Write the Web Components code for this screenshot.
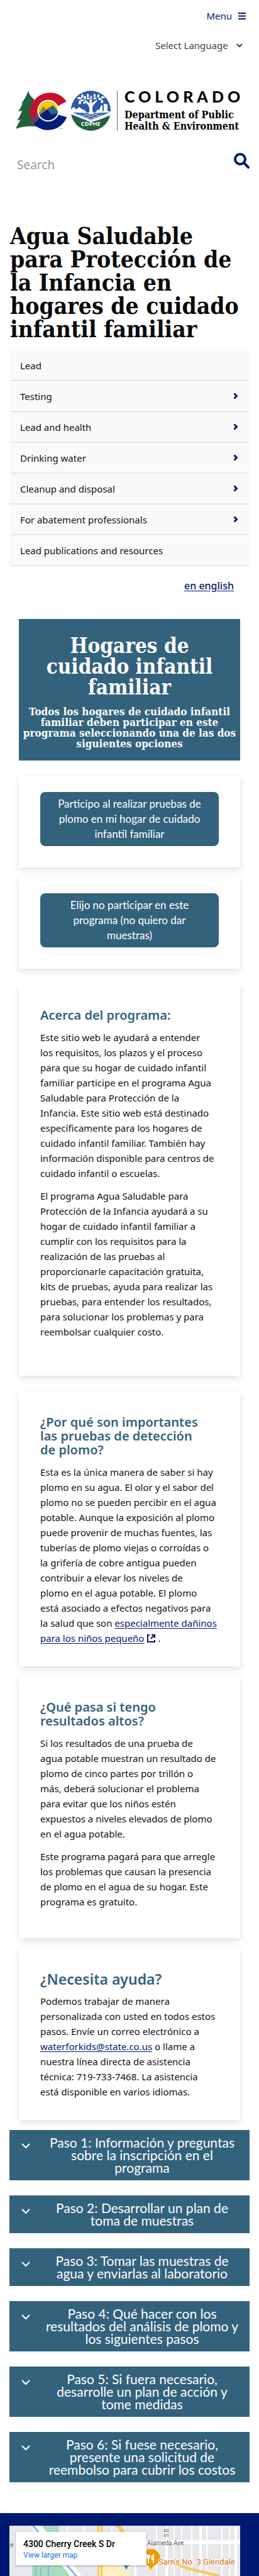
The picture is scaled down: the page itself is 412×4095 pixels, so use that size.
<!DOCTYPE html>
<html lang="es">
<head>
<meta charset="utf-8">
<meta name="viewport" content="width=device-width, initial-scale=1">
<title>Agua Saludable para Protección de la Infancia</title>
<style>
  :root {
    --sans: "Noto Sans", "Open Sans", sans-serif;
    --display: Lato, sans-serif;
    --slab: "DejaVu Serif Condensed", "DejaVu Serif", serif;
    --teal: #33627d;
    --navy: #001970;
  }
  body { margin: 0; background: #fff; color: #111; font: 15px/24px var(--sans); }
</style>
</head>
<body>
<site-header></site-header>
<main>
  <page-title>Agua Saludable<br>para Protección de<br>la Infancia en<br>hogares de cuidado<br>infantil familiar</page-title>
  <section-nav>
    <nav-item>Lead</nav-item>
    <nav-item expandable>Testing</nav-item>
    <nav-item expandable>Lead and health</nav-item>
    <nav-item expandable>Drinking water</nav-item>
    <nav-item expandable>Cleanup and disposal</nav-item>
    <nav-item expandable>For abatement professionals</nav-item>
    <nav-item>Lead publications and resources</nav-item>
  </section-nav>
  <language-switch><text-link strong>en english</text-link></language-switch>
  <card-stack>
    <hero-banner>
      <span slot="title">Hogares de<br>cuidado infantil<br>familiar</span>
      Todos los hogares de cuidado infantil<br>familiar deben participar en este<br>programa seleccionando una de las dos<br>siguientes opciones
    </hero-banner>
    <content-card kind="action"><action-button>Participo al realizar pruebas de<br>plomo en mi hogar de cuidado<br>infantil familiar</action-button></content-card>
    <content-card kind="action last"><action-button>Elijo no participar en este<br>programa (no quiero dar<br>muestras)</action-button></content-card>
    <content-card kind="about">
      <h3>Acerca del programa:</h3>
      <p>Este sitio web le ayudará a entender<br>los requisitos, los plazos y el proceso<br>para que su hogar de cuidado infantil<br>familiar participe en el programa Agua<br>Saludable para Protección de la<br>Infancia. Este sitio web está destinado<br>específicamente para los hogares de<br>cuidado infantil familiar. También hay<br>información disponible para centros de<br>cuidado infantil o escuelas.</p>
      <p>El programa Agua Saludable para<br>Protección de la Infancia ayudará a su<br>hogar de cuidado infantil familiar a<br>cumplir con los requisitos para la<br>realización de las pruebas al<br>proporcionarle capacitación gratuita,<br>kits de pruebas, ayuda para realizar las<br>pruebas, para entender los resultados,<br>para solucionar los problemas y para<br>reembolsar cualquier costo.</p>
    </content-card>
    <content-card kind="why">
      <h3>¿Por qué son importantes<br>las pruebas de detección<br>de plomo?</h3>
      <p>Esta es la única manera de saber si hay<br>plomo en su agua. El olor y el sabor del<br>plomo no se pueden percibir en el agua<br>potable. Aunque la exposición al plomo<br>puede provenir de muchas fuentes, las<br>tuberías de plomo viejas o corroídas o<br>la grifería de cobre antigua pueden<br>contribuir a elevar los niveles de<br>plomo en el agua potable. El plomo<br>está asociado a efectos negativos para<br>la salud que son <text-link external>especialmente dañinos<br>para los niños pequeño</text-link> .</p>
    </content-card>
    <content-card kind="results">
      <h3>¿Qué pasa si tengo<br>resultados altos?</h3>
      <p>Si los resultados de una prueba de<br>agua potable muestran un resultado de<br>plomo de cinco partes por trillón o<br>más, deberá solucionar el problema<br>para evitar que los niños estén<br>expuestos a niveles elevados de plomo<br>en el agua potable.</p>
      <p>Este programa pagará para que arregle<br>los problemas que causan la presencia<br>de plomo en el agua de su hogar. Este<br>programa es gratuito.</p>
    </content-card>
    <content-card kind="help">
      <h2>¿Necesita ayuda?</h2>
      <p>Podemos trabajar de manera<br>personalizada con usted en todos estos<br>pasos. Envíe un correo electrónico a<br><text-link href="mailto:waterforkids@state.co.us">waterforkids@state.co.us</text-link> o llame a<br>nuestra línea directa de asistencia<br>técnica: 719-733-7468. La asistencia<br>está disponible en varios idiomas.</p>
    </content-card>
  </card-stack>
  <step-list>
    <step-item>Paso 1: Información y preguntas<br>sobre la inscripción en el<br>programa</step-item>
    <step-item>Paso 2: Desarrollar un plan de<br>toma de muestras</step-item>
    <step-item>Paso 3: Tomar las muestras de<br>agua y enviarlas al laboratorio</step-item>
    <step-item>Paso 4: Qué hacer con los<br>resultados del análisis de plomo y<br>los siguientes pasos</step-item>
    <step-item>Paso 5: Si fuera necesario,<br>desarrolle un plan de acción y<br>tome medidas</step-item>
    <step-item>Paso 6: Si fuese necesario,<br>presente una solicitud de<br>reembolso para cubrir los costos</step-item>
  </step-list>
</main>
<site-footer><office-map></office-map></site-footer>

<script>
const define = (name, markup, setup) => {
  const template = document.createElement('template');
  template.innerHTML = markup;
  customElements.define(name, class extends HTMLElement {
    constructor() {
      super();
      this.attachShadow({ mode: 'open' }).append(template.content.cloneNode(true));
    }
    connectedCallback() { if (setup) setup(this, this.shadowRoot); }
  });
};

define('agency-logo', `
<style>
  :host { display: block; }
  a { display: flex; height: 64px; color: #000; text-decoration: none; }
  svg { width: 152px; height: 64px; flex: none; overflow: visible; }
  .words { border-left: 1px solid #666; margin-left: 9px; padding-left: 11px; white-space: nowrap; }
  .state { display: block; font: 900 25px/18px Lato, sans-serif; letter-spacing: 6px; margin-bottom: 12px; }
  .dept { display: block; font: bold 16px/18px var(--slab); }
</style>
<a href="#">
  <svg viewBox="0 0 456 192" aria-hidden="true">
    <path fill="#24613b" d="M60 0 C66 22 76 32 86 40 L96 70 L100 172 Q48 166 0 182 C8 164 18 148 24 138 L6 144 C18 126 26 110 30 96 L12 100 C24 84 30 68 34 58 L24 66 C40 44 54 22 60 0Z"/>
    <path fill="#c8102e" d="M243 52 A96 96 0 1 0 84 160 L120 130 L160 96Z"/>
    <path fill="#6d3a5d" d="M66 138 L104 108 L122 134 L86 162 A96 96 0 0 1 66 138Z"/>
    <path fill="#001e78" d="M86 160 L122 124 L160 96 L244 126 A96 96 0 0 1 86 160Z"/>
    <path fill="#fff" d="M160 96 L200 78 L255 44 L255 130 L200 114Z"/>
    <circle cx="155" cy="96" r="52" fill="#fff"/>
    <clipPath id="disc"><circle cx="155" cy="96" r="46"/></clipPath>
    <g clip-path="url(#disc)">
      <rect x="105" y="46" width="100" height="100" fill="#ffc800"/>
      <path fill="#8a8438" d="M104 118 L132 74 L146 90 L158 78 L180 100 L180 120Z"/>
      <path fill="#2c628e" d="M140 100 L178 70 L206 104 L206 120 L150 120Z"/>
      <path fill="#001e78" d="M104 124 L120 112 L150 90 L172 116 L206 106 L206 150 L104 150Z"/>
    </g>
    <text x="209" y="189" font-family="Lato" font-size="14" fill="#222">™</text>
    <clipPath id="seal"><circle cx="358" cy="96" r="95"/></clipPath>
    <g clip-path="url(#seal)">
      <rect x="262" width="192" height="192" fill="#2d59a5"/>
      <path fill="#fff" d="M262 92 L276 78 L290 90 L302 78 L318 90 L328 92 L338 104 L380 104 L392 90 L398 94 L408 70 L414 70 L414 98 L420 98 L420 62 L438 66 L438 98 L456 100 V124 L358 150 L262 112Z"/>
      <path fill="#2d59a5" d="M272 104 L358 140 L448 104 L358 108Z"/>
      <path stroke="#fff" stroke-width="2" fill="none" d="M300 112 L362 138 M322 110 L382 130 M344 106 L406 122 M416 112 L354 138 M396 108 L334 132 M374 106 L314 124"/>
      <path fill="#24613b" d="M262 116 L358 156 L456 116 V192 H262Z"/>
      <path stroke="#fff" stroke-width="4" fill="none" d="M262 108 L358 148 L456 108"/>
      <path fill="#fff" d="M348 112 C354 96 352 84 348 72 L328 48 L332 44 L352 60 L356 52 L360 52 L364 60 L386 44 L390 48 L368 72 C364 86 366 98 372 112Z"/>
      <circle cx="358" cy="48" r="7" fill="#fff"/>
      <g fill="#fff">
        <ellipse cx="304" cy="36" rx="10" ry="5"/><ellipse cx="316" cy="46" rx="9" ry="5"/><ellipse cx="306" cy="56" rx="6" ry="9"/>
        <ellipse cx="318" cy="26" rx="5" ry="9"/><ellipse cx="330" cy="34" rx="5" ry="9"/><ellipse cx="344" cy="24" rx="5" ry="9"/>
        <ellipse cx="346" cy="38" rx="8" ry="4"/><ellipse cx="360" cy="32" rx="4" ry="9"/><ellipse cx="376" cy="24" rx="5" ry="9"/>
        <ellipse cx="378" cy="38" rx="8" ry="4"/><ellipse cx="394" cy="26" rx="5" ry="9"/><ellipse cx="402" cy="40" rx="9" ry="5"/>
        <ellipse cx="416" cy="32" rx="9" ry="5"/><ellipse cx="412" cy="52" rx="6" ry="8"/><ellipse cx="328" cy="58" rx="6" ry="6"/>
      </g>
    </g>
    <text x="358" y="169" text-anchor="middle" font-family="Noto Sans" font-weight="700" font-size="28" fill="#fff">CDPHE</text>
  </svg>
  <span class="words"><span class="state">COLORADO</span><span class="dept">Department of Public<br>Health &amp; Environment</span></span>
</a>`);

define('site-header', `
<style>
  :host { display: block; padding: 12px 15px 0 25px; }
  .menu { display: flex; justify-content: flex-end; padding-right: 6px; }
  .menu button { display: flex; align-items: center; gap: 10px; border: 0; padding: 0; background: none; color: var(--navy); font: 15px/26px var(--sans); }
  .language { display: grid; justify-content: end; align-items: center; margin-top: 22px; padding-right: 11px; }
  .language > * { grid-area: 1 / 1; }
  select { appearance: none; border: 0; padding: 0 23px 0 0; background: none; color: #444; font: 15px/24px var(--sans); }
  .language svg { justify-self: end; pointer-events: none; }
  agency-logo { margin-top: 60px; }
  form { display: flex; justify-content: space-between; margin-top: 35px; height: 38px; }
  input { flex: 1; min-width: 0; border: 0; padding: 0 2px; background: none; color: #333; font: 19px/38px var(--sans); outline: 0; }
  input::placeholder { color: #999; opacity: 1; }
  form button { border: 0; padding: 0; background: none; height: 25px; }
  svg { display: block; }
</style>
<div class="menu"><button type="button">Menu
  <svg width="12" height="11" viewBox="0 0 12 11"><path stroke="#001970" stroke-width="2" d="M0 1H12M0 5.5H12M0 10H12"/></svg>
</button></div>
<div class="language">
  <select aria-label="Select Language"><option>Select Language</option></select>
  <svg width="10" height="7" viewBox="0 0 10 7"><path fill="none" stroke="#444" stroke-width="2" d="M1 1L5 5L9 1"/></svg>
</div>
<agency-logo></agency-logo>
<form>
  <input type="text" placeholder="Search" aria-label="Search">
  <button type="button" aria-label="Search"><svg width="25" height="25" viewBox="0 0 25 25"><circle cx="10" cy="10" r="8" fill="none" stroke="#001970" stroke-width="4"/><path d="M16 16L23 23" stroke="#001970" stroke-width="4" stroke-linecap="round"/></svg></button>
</form>`);

define('page-title', `
<style>
  :host { display: block; padding: 76px 0 15px 16px; }
  h1 { margin: 0; font: bold 37px/37px var(--slab); color: #0a0a0a; }
</style>
<h1><slot></slot></h1>`);

define('section-nav', `
<style>:host { display: block; margin: 0 16px; } nav { display: flex; flex-direction: column; }</style>
<nav aria-label="Lead"><slot></slot></nav>`);

define('nav-item', `
<style>
  :host { display: block; }
  a { display: flex; align-items: center; justify-content: space-between; height: 47px; padding: 0 17px 0 16px; background: #fafafa; border-bottom: 2px solid #e8e8e8; color: #111; text-decoration: none; }
  svg { display: none; }
  :host([expandable]) svg { display: block; }
</style>
<a href="#"><slot></slot><svg width="8" height="11" viewBox="0 0 8 11"><path fill="none" stroke="#001970" stroke-width="3" d="M1.500 1.500L5.500 5.500L1.500 9.500"/></svg></a>`);

define('text-link', `
<style>
  :host { display: inline; }
  a { color: #001970; text-decoration: underline; text-underline-offset: 2px; }
  :host([strong]) a { font-size: 16px; font-weight: 500; }
  svg { display: none; }
  :host([external]) svg { display: inline-block; margin-left: 5px; vertical-align: -1px; }
</style>
<a><slot></slot></a><svg width="13" height="13" viewBox="0 0 13 13"><path fill="none" stroke="#001970" stroke-width="2" d="M4 1H1V12H12V9M7 1H12V6M12 1L6 7"/></svg>`,
(host, root) => { root.querySelector('a').href = host.getAttribute('href') || '#'; });

define('language-switch', `
<style>:host { display: block; padding: 19px 40px 41px; text-align: right; }</style>
<slot></slot>`);

define('card-stack', `
<style>:host { display: block; margin: 0 30px; }</style>
<slot></slot>`);

define('hero-banner', `
<style>
  :host { display: block; background: var(--teal); color: #fff; padding: 26px 0 18px; text-align: center; margin-bottom: 24px; }
  h2 { margin: 0 0 14px; font: bold 33px/33px var(--slab); }
  p { margin: 0; font: bold 17px/17px var(--slab); }
</style>
<h2><slot name="title"></slot></h2>
<p><slot></slot></p>`);

define('content-card', `
<style>
  :host { display: block; background: #fff; box-shadow: 0 4px 10px rgba(0,0,0,.12); padding: 38px 14px 33px 34px; margin-bottom: 16px; }
  :host([kind~="action"]) { padding: 26px 34px 34px; margin-bottom: 15px; }
  :host([kind~="last"]) { margin-bottom: 25px; }
  :host([kind="about"]) { padding-bottom: 58px; margin-bottom: 25px; }
  :host([kind="results"]) { padding-bottom: 46px; }
  ::slotted(p) { margin: 12px 0 0; }
  ::slotted(h2), ::slotted(h3) { margin: 0; color: var(--teal); font: 600 20px/22px var(--sans); }
  ::slotted(h2) { font-size: 23px; }
</style>
<slot></slot>`);

define('action-button', `
<style>
  :host { display: block; }
  a { display: block; padding: 7px 10px; border-radius: 8px; background: var(--teal); color: #fff; font: 17px/24px var(--display); text-align: center; text-decoration: none; }
</style>
<a href="#"><slot></slot></a>`);

define('step-list', `
<style>:host { display: flex; flex-direction: column; gap: 24px; padding: 0 15px 49px; }</style>
<slot></slot>`);

define('step-item', `
<style>
  :host { display: block; }
  h3 { margin: 0; }
  button { display: grid; grid-template-columns: 14px 1fr; column-gap: 14px; width: 100%; border: 0; padding: 10px 7px 10px 19px; background: var(--teal); color: #fff; font: 21px/20px var(--display); text-align: center; }
  svg { margin-top: 11px; }
</style>
<h3><button type="button" aria-expanded="false">
  <svg width="14" height="9" viewBox="0 0 14 9"><path fill="none" stroke="#fff" stroke-width="2" d="M1 1L7 7L13 1"/></svg>
  <span><slot></slot></span>
</button></h3>`);

define('site-footer', `
<style>:host { display: block; background: var(--navy); padding: 20px 30px 0 15px; }</style>
<footer><slot></slot></footer>`);

define('office-map', `
<style>
  :host { display: block; position: relative; height: 80px; overflow: hidden; background: #e8e8ec; font-family: Roboto, sans-serif; }
  svg { display: block; width: 100%; height: 80px; }
  .card { position: absolute; left: 10px; top: 10px; box-sizing: border-box; width: 208px; height: 53px; padding: 9px 12px; background: #fff; box-shadow: 0 1px 3px rgba(0,0,0,.3); }
  strong { display: block; font: 500 14px/20px Roboto, sans-serif; color: #000; }
  a { display: block; font: 12px/16px Roboto, sans-serif; color: #1a73e8; text-decoration: none; }
</style>
<svg viewBox="0 0 367 80" preserveAspectRatio="xMinYMin slice" role="img" aria-label="Map">
  <path fill="#a8dcc0" d="M46 0H79V30H62ZM36 62H84L98 80H36Z"/>
  <path fill="#fff0c4" d="M138 60H192V80H146Z"/>
  <path stroke="#fff" stroke-width="2" d="M92 0V12M118 0V12M163 0V12M234 0V80M262 0V80M274 0V80M290 0V80M314 0V80M338 0V80M350 0V80"/>
  <path stroke="#fff" stroke-width="4" d="M200 60V80M250 0V80M304 0V80M360 0V80"/>
  <path stroke="#fff" stroke-width="6" d="M218 26H367"/>
  <path stroke="#fff" stroke-width="14" d="M34 -10L114 90"/>
  <path stroke="#8eb4e3" stroke-width="3" d="M34 -4L120 96"/>
  <path stroke="#f8c65b" stroke-width="8" d="M144 0V80"/><path stroke="#fff0b8" stroke-width="2" d="M144 0V80"/>
  <path stroke="#f8c65b" stroke-width="6" d="M168 -6L192 24"/>
  <path stroke="#f8c65b" stroke-width="4" fill="none" d="M256 58L284 68L334 80"/>
  <path stroke="#8eb4e3" stroke-width="2" d="M42 62V80M50 66V80M62 64V80"/>
  <path fill="#5b7bd5" d="M181 62H191L186 70Z"/>
  <path fill="#f29900" d="M225 71C222 60 210 60 210 52A15 15 0 0 1 240 52C240 60 228 62 225 71Z"/>
  <path stroke="#fff" stroke-width="2" fill="none" d="M221 46V60M219 46V51H223V46M229 60V46Q226 48 227 54H229"/>
  <g font-family="Roboto" fill="#5f6368">
    <text x="219" y="31" font-size="10">Alameda Ave</text>
    <text x="1" y="34" font-size="10">e</text>
    <text transform="translate(253 18) rotate(-90)" font-size="9">S B</text>
  </g>
  <text x="237" y="62" font-family="Roboto" font-size="13" fill="#d56e0c" stroke="#fff" stroke-width="2" paint-order="stroke">Sam's No. 3 Glendale</text>
</svg>
<div class="card"><strong>4300 Cherry Creek S Dr</strong><a href="#">View larger map</a></div>`);
</script>
</body>
</html>
